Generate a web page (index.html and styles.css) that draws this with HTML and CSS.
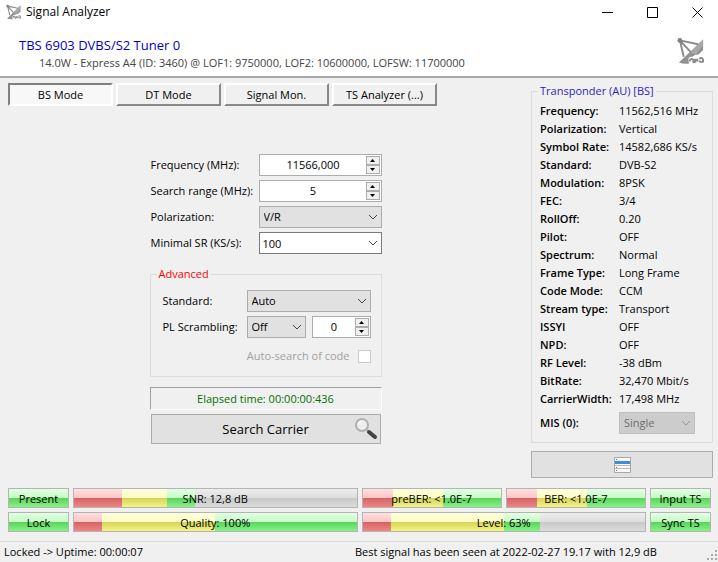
FILE: index.html
```html
<!DOCTYPE html>
<html lang="en">
<head>
  <meta charset="UTF-8">
  <title>Signal Analyzer</title>
  <link rel="stylesheet" href="styles.css">
</head>
<body>
  <!-- shared shapes -->
  <svg class="defs" aria-hidden="true">
    <defs>
      <symbol id="dish" viewBox="0 0 28 28">
        <path d="M27 2 L2 26 Q7 28 13 27 L27 13 Z" fill="#929292"/>
        <path d="M27 2 L14 15 L19 18 L27 8 Z" fill="#a8a8a8"/>
        <path d="M3 3 L7 20 M3 3 L14 15 M3 3 L22 7" fill="none" stroke="#8a8a8a" stroke-width="2"/>
        <circle cx="3" cy="3" r="2.500" fill="#808080"/>
        <path d="M12 25 Q11 19 16 20 Q20 16 28 19 V28 H13 Z" fill="#fff"/>
        <path d="M13 25 q1 -4 4 -2 q-1 4 2 2 v-3 m2 3 v-3 m2 0 q3 -2 4 1 v2 q-3 1 -4 -1" fill="none" stroke="#8c8c8c" stroke-width="2"/>
      </symbol>
      <symbol id="chevron" viewBox="0 0 10 6">
        <path d="M1 1 L5 5 L9 1" fill="none" stroke="currentColor"/>
      </symbol>
      <symbol id="up" viewBox="0 0 5 3"><path d="M0 3 L2.500 0 L5 3 Z"/></symbol>
      <symbol id="down" viewBox="0 0 5 3"><path d="M0 0 L2.500 3 L5 0 Z"/></symbol>
    </defs>
  </svg>

  <div class="window">
    <div class="titlebar">
      <svg class="title-icon"><use href="#dish"/></svg>
      <span class="title">Signal Analyzer</span>
      <div class="win-buttons">
        <button aria-label="Minimize"><svg width="11" height="11"><path d="M0 5.500 H11"/></svg></button>
        <button aria-label="Maximize"><svg width="11" height="11"><path d="M0.500 0.500 H10.500 V10.500 H0.500 Z"/></svg></button>
        <button aria-label="Close"><svg width="11" height="11"><path d="M0.500 0.500 L10.500 10.500 M10.500 0.500 L0.500 10.500"/></svg></button>
      </div>
    </div>

    <header class="header">
      <div>
        <h1>TBS 6903 DVBS/S2 Tuner 0</h1>
        <p>14.0W - Express A4 (ID: 3460) @ LOF1: 9750000, LOF2: 10600000, LOFSW: 11700000</p>
      </div>
      <svg class="header-icon"><use href="#dish"/></svg>
    </header>

    <main class="main">
      <div class="left">
        <nav class="tabs">
          <button class="tab active">BS Mode</button>
          <button class="tab">DT Mode</button>
          <button class="tab">Signal Mon.</button>
          <button class="tab">TS Analyzer (...)</button>
        </nav>

        <form class="search">
          <div class="row">
            <label for="freq">Frequency (MHz):</label>
            <div class="spin">
              <input id="freq" type="text" value="11566,000">
              <div class="arrows">
                <button type="button" aria-label="Up"><svg><use href="#up"/></svg></button>
                <button type="button" aria-label="Down"><svg><use href="#down"/></svg></button>
              </div>
            </div>
          </div>
          <div class="row">
            <label for="range">Search range (MHz):</label>
            <div class="spin">
              <input id="range" type="text" value="5">
              <div class="arrows">
                <button type="button" aria-label="Up"><svg><use href="#up"/></svg></button>
                <button type="button" aria-label="Down"><svg><use href="#down"/></svg></button>
              </div>
            </div>
          </div>
          <div class="row">
            <label for="pol">Polarization:</label>
            <div class="combo">
              <select id="pol"><option>V/R</option><option>H/L</option></select>
              <svg><use href="#chevron"/></svg>
            </div>
          </div>
          <div class="row">
            <label for="minsr">Minimal SR (KS/s):</label>
            <div class="combo editable">
              <input id="minsr" type="text" value="100">
              <svg><use href="#chevron"/></svg>
            </div>
          </div>

          <fieldset class="advanced">
            <legend>Advanced</legend>
            <div class="row">
              <label for="standard">Standard:</label>
              <div class="combo">
                <select id="standard"><option>Auto</option></select>
                <svg><use href="#chevron"/></svg>
              </div>
            </div>
            <div class="row">
              <label for="pls">PL Scrambling:</label>
              <div class="pair">
                <div class="combo">
                  <select id="pls"><option>Off</option><option>On</option></select>
                  <svg><use href="#chevron"/></svg>
                </div>
                <div class="spin">
                  <input type="text" value="0" aria-label="PL code">
                  <div class="arrows">
                    <button type="button" aria-label="Up"><svg><use href="#up"/></svg></button>
                    <button type="button" aria-label="Down"><svg><use href="#down"/></svg></button>
                  </div>
                </div>
              </div>
            </div>
            <label class="auto">Auto-search of code <input type="checkbox" disabled></label>
          </fieldset>

          <div class="elapsed">Elapsed time: 00:00:00:436</div>
          <button type="button" class="search-button">
            Search Carrier
            <svg width="24" height="24" viewBox="0 0 24 24">
              <path d="M13 13 L17 17" stroke="#aaa" stroke-width="2"/>
              <path d="M15 15 L21 20" stroke="#444" stroke-width="4" stroke-linecap="round"/>
              <circle cx="8" cy="8" r="6" fill="#eee" stroke="#b0b0b0" stroke-width="2"/>
              <path d="M4 8 Q4 4 8 4 Q6 6 4 8" fill="#fff"/>
            </svg>
          </button>
        </form>
      </div>

      <aside class="right">
        <fieldset class="transponder">
          <legend>Transponder (AU) [BS]</legend>
          <table>
            <tr><th>Frequency:</th><td>11562,516 MHz</td></tr>
            <tr><th>Polarization:</th><td>Vertical</td></tr>
            <tr><th>Symbol Rate:</th><td>14582,686 KS/s</td></tr>
            <tr><th>Standard:</th><td>DVB-S2</td></tr>
            <tr><th>Modulation:</th><td>8PSK</td></tr>
            <tr><th>FEC:</th><td>3/4</td></tr>
            <tr><th>RollOff:</th><td>0.20</td></tr>
            <tr><th>Pilot:</th><td>OFF</td></tr>
            <tr><th>Spectrum:</th><td>Normal</td></tr>
            <tr><th>Frame Type:</th><td>Long Frame</td></tr>
            <tr><th>Code Mode:</th><td>CCM</td></tr>
            <tr><th>Stream type:</th><td>Transport</td></tr>
            <tr><th>ISSYI</th><td>OFF</td></tr>
            <tr><th>NPD:</th><td>OFF</td></tr>
            <tr><th>RF Level:</th><td>-38 dBm</td></tr>
            <tr><th>BitRate:</th><td>32,470 Mbit/s</td></tr>
            <tr><th>CarrierWidth:</th><td>17,498 MHz</td></tr>
          </table>
          <div class="mis">
            <label for="mis">MIS (0):</label>
            <div class="combo disabled">
              <select id="mis" disabled><option>Single</option></select>
              <svg><use href="#chevron"/></svg>
            </div>
          </div>
        </fieldset>
        <button class="list-button" aria-label="Carrier list">
          <svg width="17" height="16">
            <path d="M0.500 0.500 H16.500 V15.500 H0.500 Z" fill="#f8f8f8" stroke="#a8a8a8"/>
            <path d="M1 4 H16 V7 H1 Z" fill="#3a8fd8"/>
            <path d="M1 8.500 H16 M1 11.500 H16" stroke="#bbb"/>
            <path d="M2 2.500 H3 M2 10.500 H3 M2 13.500 H3" stroke="#777"/>
          </svg>
        </button>
      </aside>
    </main>

    <section class="meters">
      <div class="lamp">Present</div>
      <div class="bar wide">
        <i class="red" style="width: 17%"></i><i class="yellow" style="width: 16%"></i><i class="green" style="width: 10%"></i>
        <span>SNR: 12,8 dB</span>
      </div>
      <div class="bar">
        <i class="red" style="width: 22%"></i><i class="yellow" style="width: 36%"></i><i class="green" style="width: 42%"></i>
        <span>preBER: &lt;1.0E-7</span>
      </div>
      <div class="bar">
        <i class="red" style="width: 22%"></i><i class="yellow" style="width: 36%"></i><i class="green" style="width: 42%"></i>
        <span>BER: &lt;1.0E-7</span>
      </div>
      <div class="lamp">Input TS</div>

      <div class="lamp">Lock</div>
      <div class="bar wide">
        <i class="red" style="width: 10%"></i><i class="yellow" style="width: 40%"></i><i class="green" style="width: 50%"></i>
        <span>Quality: 100%</span>
      </div>
      <div class="bar wide">
        <i class="red" style="width: 10%"></i><i class="yellow" style="width: 40%"></i><i class="green" style="width: 13%"></i>
        <span>Level: 63%</span>
      </div>
      <div class="lamp">Sync TS</div>
    </section>

    <footer class="status">
      <span>Locked -&gt; Uptime: 00:00:07</span>
      <span>Best signal has been seen at 2022-02-27 19.17 with 12,9 dB</span>
      <svg class="grip" width="12" height="12">
        <path d="M9 1 h2 M5 5 h2 M9 5 h2 M1 9 h2 M5 9 h2 M9 9 h2" stroke="#aaa" stroke-width="2"/>
      </svg>
    </footer>
  </div>
</body>
</html>
```
FILE: styles.css
```css
* {
  box-sizing: border-box;
}

body {
  margin: 0;
  background: #f0f0f0;
  color: #000;
  font: 11px/16px "Open Sans", "Noto Sans", sans-serif;
}

button, input, select {
  font: inherit;
  color: inherit;
  margin: 0;
  padding: 0;
  border-radius: 0;
}

.defs {
  position: absolute;
  width: 0;
  height: 0;
}

.window {
  display: flex;
  flex-direction: column;
  min-height: 100vh;
}

/* title + header */
.titlebar {
  display: flex;
  align-items: center;
  height: 24px;
  padding-left: 6px;
  background: #fff;
}

.title-icon {
  width: 15px;
  height: 16px;
  margin-right: 5px;
}

.title {
  flex: 1;
  font-size: 12px;
}

.win-buttons {
  display: flex;
  gap: 4px;
}

.win-buttons button {
  width: 41px;
  height: 22px;
  border: none;
  background: none;
}

.win-buttons svg {
  display: block;
  margin: 0 auto;
  fill: none;
  stroke: #000;
}

.header {
  display: flex;
  justify-content: space-between;
  height: 54px;
  padding: 13px 14px 0 19px;
  background: #fff;
  border-bottom: 2px solid #a8a8a8;
}

.header h1 {
  margin: 0;
  font-size: 13px;
  line-height: 16px;
  font-weight: 500;
  color: #0000c8;
}

.header p {
  margin: 2px 0 0 20px;
  color: #444;
}

.header-icon {
  width: 27px;
  height: 28px;
}

/* main area */
.main {
  display: flex;
  gap: 8px;
  padding: 5px 5px 0 8px;
}

.left {
  flex: 1;
}

.tabs {
  display: flex;
  gap: 3px;
}

.tab {
  width: 105px;
  height: 23px;
  background: #f0f0f0;
  border: 2px solid;
  border-color: #fff #888 #888 #fff;
  font-weight: 500;
}

.tab.active {
  background: #f8f8f8;
  border-color: #808080 #fff #fff #808080;
}

.search {
  width: 232px;
  margin: 48px auto 0;
  display: flex;
  flex-direction: column;
  gap: 4px;
}

.row {
  display: grid;
  grid-template-columns: 108px 1fr;
  align-items: center;
  padding-left: 1px;
}

.row label {
  white-space: nowrap;
}

.spin {
  display: flex;
  min-width: 0;
  height: 22px;
  padding: 1px;
  background: #fff;
  border: 1px solid #abadb3;
}

.spin input {
  flex: 1;
  width: 0;
  min-width: 0;
  border: none;
  background: none;
  text-align: center;
}

.arrows {
  display: flex;
  flex-direction: column;
  width: 14px;
}

.arrows button {
  flex: 1;
  display: flex;
  align-items: center;
  justify-content: center;
  background: #f0f0f0;
  border: 1px solid #adadad;
}

.arrows svg {
  width: 5px;
  height: 3px;
}

.combo {
  position: relative;
  height: 22px;
}

.combo select, .combo input {
  display: block;
  width: 100%;
  height: 100%;
  padding: 0 4px;
  appearance: none;
  background: #e1e1e1;
  border: 1px solid #adadad;
}

.combo.editable input {
  padding: 0 3px;
  background: #fff;
  border-color: #7a7a7a;
}

.combo svg {
  position: absolute;
  right: 4px;
  top: 8px;
  width: 10px;
  height: 6px;
  color: #444;
  pointer-events: none;
}

.combo.disabled select {
  background: #ccc;
  border-color: #bfbfbf;
  color: #6d6d6d;
  opacity: 1;
}

.combo.disabled svg {
  color: #999;
}

fieldset {
  margin: 0;
  min-width: 0;
  border: 1px solid #dcdcdc;
}

legend {
  padding: 0 2px;
}

.advanced {
  display: flex;
  flex-direction: column;
  gap: 4px;
  margin-top: 8px;
  padding: 8px 10px 12px 11px;
}

.advanced legend {
  margin-left: -5px;
  color: #f00;
}

.advanced .row {
  grid-template-columns: 84px 1fr;
}

.pair {
  display: grid;
  grid-template-columns: 1fr 1fr;
  gap: 6px;
}

.auto {
  display: flex;
  align-items: center;
  justify-content: flex-end;
  gap: 8px;
  margin-top: 6px;
  color: #a0a0a0;
}

.auto input {
  appearance: none;
  width: 13px;
  height: 13px;
  background: #fff;
  border: 1px solid #ccc;
}

.elapsed {
  height: 23px;
  margin-top: 6px;
  border: 1px solid;
  border-color: #a0a0a0 #fff #fff #a0a0a0;
  line-height: 22px;
  text-align: center;
  color: #007000;
}

.search-button {
  position: relative;
  height: 30px;
  margin: 0 1px;
  background: #e1e1e1;
  border: 1px solid #adadad;
  font-size: 13px;
}

.search-button svg {
  position: absolute;
  right: 2px;
  top: 2px;
}

/* transponder info */
.right {
  width: 182px;
  display: flex;
  flex-direction: column;
  gap: 8px;
}

.transponder {
  padding: 3px 6px 8px;
}

.transponder legend {
  color: #3020c8;
}

.transponder table {
  width: 100%;
  border-collapse: collapse;
}

.transponder th, .transponder td {
  height: 18px;
  padding: 0;
  text-align: left;
  white-space: nowrap;
}

.transponder th {
  width: 81px;
  padding-left: 2px;
  font-weight: 600;
}

.mis {
  display: grid;
  grid-template-columns: 81px 76px;
  align-items: center;
  margin-top: 4px;
}

.mis label {
  padding-left: 2px;
  font-weight: 600;
}

.list-button {
  display: flex;
  align-items: center;
  justify-content: center;
  height: 27px;
  background: #e1e1e1;
  border: 1px solid #adadad;
}

/* signal meters */
.meters {
  display: grid;
  grid-template-columns: 61px 1fr 1fr 1fr 1fr 61px;
  gap: 4px;
  padding: 10px 7px 9px 8px;
}

.lamp, .bar {
  height: 20px;
  border: 1px solid #b4b4b4;
  line-height: 19px;
  text-align: center;
}

.lamp, .green {
  background: linear-gradient(#e4ffe4, #c4fcc4 50%, #5cd05c 50%, #84f484);
}

.bar {
  position: relative;
  display: flex;
  background: linear-gradient(#eee, #dcdcdc 50%, #c8c8c8 50%, #dcdcdc);
}

.bar.wide {
  grid-column: span 2;
}

.bar span {
  position: absolute;
  inset: 0;
}

.red {
  background: linear-gradient(#ffe0e0, #ffc4c4 50%, #d06464 50%, #f48484);
}

.yellow {
  background: linear-gradient(#ffffe0, #fcfcc0 50%, #d2d25c 50%, #f4f484);
}

.status {
  display: flex;
  align-items: center;
  flex: 1;
  padding: 0 0 0 4px;
  border-top: 1px solid #d8d8d8;
}

.status span {
  flex: 1;
}

.grip {
  align-self: flex-end;
}
```
